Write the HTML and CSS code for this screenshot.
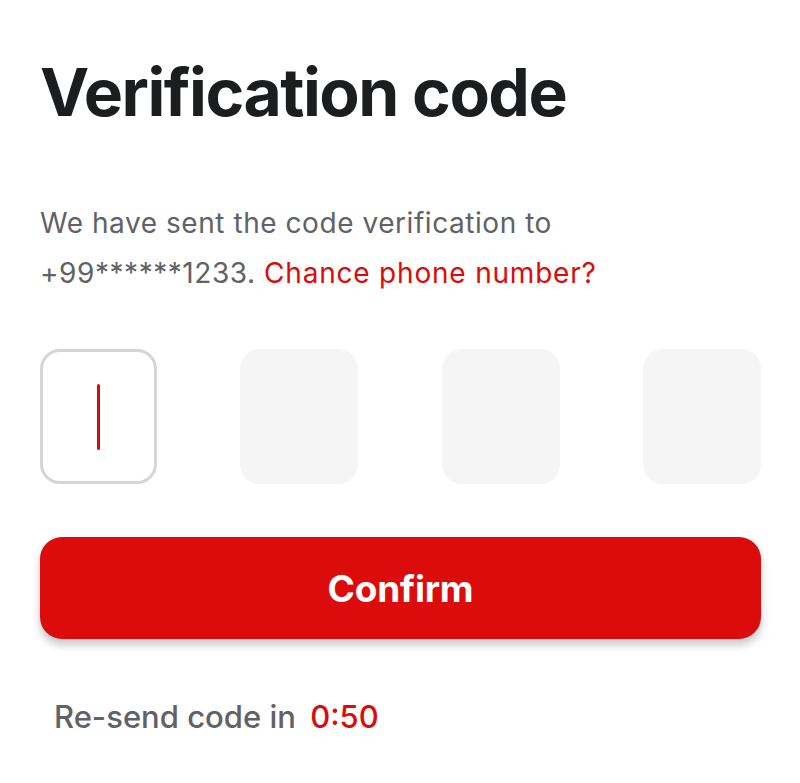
FILE: index.html
```html
<!DOCTYPE html>
<html lang="en">
<head>
<meta charset="utf-8">
<title>Verification code</title>
<link rel="stylesheet" href="styles.css">
</head>
<body>
<main class="page">
  <h1 class="title">Verification code</h1>
  <p class="lead">We have sent the code verification to<br>+99******1233. <a class="link" href="#">Chance phone number?</a></p>
  <div class="otp">
    <div class="cell active"><span class="cursor"></span></div>
    <div class="cell"></div>
    <div class="cell"></div>
    <div class="cell"></div>
  </div>
  <button class="confirm" type="button">Confirm</button>
  <p class="resend">Re-send code in <span class="timer">0:50</span></p>
</main>
</body>
</html>
```

FILE: styles.css
```css
* { box-sizing: border-box; }
html, body { margin: 0; padding: 0; background: #ffffff; }
body { font-family: Inter, "Noto Sans", sans-serif; }
.page {
  width: 800px;
  height: 783px;
  padding: 0 39px 0 40px;
  display: flex;
  flex-direction: column;
}
.title {
  margin: 53px 0 0;
  font-size: 66px;
  line-height: 78px;
  font-weight: 700;
  letter-spacing: -1.5px;
  color: #1c1d1f;
}
.lead {
  margin: 67px 0 0;
  font-size: 28px;
  line-height: 50px;
  color: #5f6266;
  letter-spacing: 0.55px;
}
.link { color: #dc0b0b; text-decoration: none; letter-spacing: 0.8px; }
.otp {
  margin-top: 51px;
  display: flex;
  justify-content: space-between;
}
.cell {
  width: 118px;
  height: 135px;
  border-radius: 20px;
  background: #f5f5f5;
  display: flex;
  align-items: center;
  justify-content: center;
}
.cell.active {
  width: 117px;
  background: #ffffff;
  border: 3px solid #d5d5d5;
}
.cursor {
  width: 3px;
  height: 66px;
  border-radius: 2px;
  background: #d40c0c;
}
.confirm {
  margin-top: 53px;
  height: 102px;
  width: 100%;
  border: 0;
  border-radius: 22px;
  background: #dd0c0c;
  color: #ffffff;
  font-family: Inter, "Noto Sans", sans-serif;
  font-size: 37px;
  font-weight: 700;
  letter-spacing: -0.2px;
  box-shadow: 0 6px 8px rgba(0, 0, 0, 0.22);
}
.resend {
  margin: 59px 0 0 14px;
  font-size: 31px;
  font-weight: 500;
  color: #5f6266;
  letter-spacing: 0;
}
.timer { color: #dc0b0b; margin-left: 6px; }
```
